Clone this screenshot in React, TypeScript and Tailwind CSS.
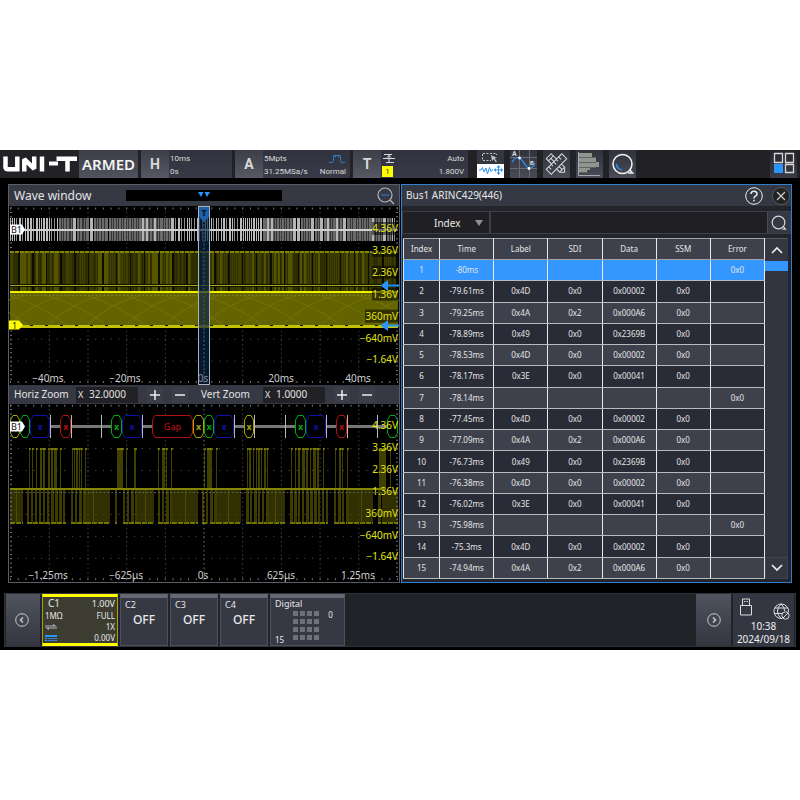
import React, { useState } from "react";

const V_GRID = [49.3, 88, 126.7, 165.4, 204, 242.7, 281.4, 320.1, 358.8];
const VOLTS = ["4.36V", "3.36V", "2.36V", "1.36V", "360mV", "−640mV", "−1.64V"];

const ROWS: string[][] = [
  ["1", "-80ms", "", "", "", "", "0x0"],
  ["2", "-79.61ms", "0x4D", "0x0", "0x00002", "0x0", ""],
  ["3", "-79.25ms", "0x4A", "0x2", "0x000A6", "0x0", ""],
  ["4", "-78.89ms", "0x49", "0x0", "0x2369B", "0x0", ""],
  ["5", "-78.53ms", "0x4D", "0x0", "0x00002", "0x0", ""],
  ["6", "-78.17ms", "0x3E", "0x0", "0x00041", "0x0", ""],
  ["7", "-78.14ms", "", "", "", "", "0x0"],
  ["8", "-77.45ms", "0x4D", "0x0", "0x00002", "0x0", ""],
  ["9", "-77.09ms", "0x4A", "0x2", "0x000A6", "0x0", ""],
  ["10", "-76.73ms", "0x49", "0x0", "0x2369B", "0x0", ""],
  ["11", "-76.38ms", "0x4D", "0x0", "0x00002", "0x0", ""],
  ["12", "-76.02ms", "0x3E", "0x0", "0x00041", "0x0", ""],
  ["13", "-75.98ms", "", "", "", "", "0x0"],
  ["14", "-75.3ms", "0x4D", "0x0", "0x00002", "0x0", ""],
  ["15", "-74.94ms", "0x4A", "0x2", "0x000A6", "0x0", ""],
];

function noise(i: number) {
  const s = Math.sin(i * 127.1 + 11.7) * 43758.5453;
  return s - Math.floor(s);
}

function Grid({ top, step }: { top: number; step: number }) {
  const bottom = top + step * 8;
  const rows = [1, 2, 3, 4, 5, 6, 7].map((n) => top + n * step);
  return (
    <g fill="none" stroke="#777">
      {V_GRID.map((x) => (
        <line key={x} x1={x} x2={x} y1={top} y2={bottom} stroke={x === 204 ? "#7a7a7a" : "#3e3e3e"} strokeDasharray="1.5 2.9" />
      ))}
      {rows.map((y, n) => (
        <line key={y} x1={10} x2={398} y1={y} y2={y} stroke={n === 3 ? "#6a6a6a" : "#4c4c4c"} strokeDasharray={n === 3 ? "1.5 2.4" : "1.2 6.54"} />
      ))}
      <line x1={10} x2={398} y1={top + 1} y2={top + 1} strokeWidth={2} strokeDasharray="1 6.74" />
      <line x1={10} x2={398} y1={bottom - 1} y2={bottom - 1} strokeWidth={2} strokeDasharray="1 6.74" />
      <line x1={11} x2={11} y1={top} y2={bottom} strokeWidth={2} strokeDasharray="1 3.39" />
      <line x1={397} x2={397} y1={top} y2={bottom} strokeWidth={2} strokeDasharray="1 3.39" />
    </g>
  );
}

function VoltLabels({ first, shade }: { first: number; shade: boolean }) {
  return (
    <g fill="#e2e21a" fontSize={10} textAnchor="end">
      {VOLTS.map((v, i) => (
        <React.Fragment key={v}>
          {shade && i < 5 && (
            <rect x={i === 4 ? 365 : 372} y={first + i * 21.9 - 10} width={i === 4 ? 33 : 26} height={13} fill="#000" opacity={0.5} />
          )}
          <text x={398} y={first + i * 21.9}>{v}</text>
        </React.Fragment>
      ))}
    </g>
  );
}

function BusFlag({ y }: { y: number }) {
  return (
    <g>
      <path d={`M10 ${y - 5}h12l3 5-3 5H10z`} fill="#fff" />
      <text x={11} y={y + 3.5} fontSize={9} fill="#111">B1</text>
    </g>
  );
}

function WavePlot() {
  const busBars = [];
  for (let x = 10, i = 0; x < 397; i++) {
    const dense = (x > 58 && x < 172) || (x > 262 && x < 392);
    const n = noise(i);
    const w = dense ? (n > 0.6 ? 3 : 2) : n > 0.75 ? 2 : 1;
    const level = dense ? (n > 0.8 ? "#b4b4b4" : "#6a6a6a") : n > 0.4 ? "#bcbcbc" : "#8c8c8c";
    busBars.push(<rect key={i} x={x} y={218} width={w} height={23} fill={level} />);
    x += w + (dense && n < 0.7 ? 0.5 : 1) + (!dense && n < 0.35 ? 1 : 0);
  }
  const stripes = [];
  for (let i = 0; i < 194; i++) {
    const n = noise(i + 500);
    stripes.push(
      <rect key={i} x={10 + i * 2} y={251} width={n > 0.7 ? 2 : 1} height={40} fill={i % 7 === 4 ? "#0c0c00" : n > 0.75 ? "#555500" : n > 0.2 ? "#404000" : "#2a2a00"} />
    );
  }
  const arcs = [];
  for (let i = -1; i < 11; i++) {
    const x = 10 + i * 39;
    arcs.push(<path key={i} d={`M${x} 324Q${x + 26} 301 ${x + 52} 296M${x} 296Q${x + 30} 305 ${x + 56} 324`} />);
  }
  return (
    <svg viewBox="9 206 390 179" className="block h-auto w-full bg-black font-['Noto_Sans',sans-serif]" role="img" aria-label="Wave window">
      <Grid top={207.5} step={21.95} />
      {busBars}
      <rect x={10} y={229} width={388} height={2} fill="#cfcfcf" />
      <rect x={10} y={251} width={388} height={40} fill="#323200" />
      {stripes}
      <line x1={10} x2={398} y1={252} y2={252} stroke="#868600" strokeWidth={2} strokeDasharray="4 1" />
      <rect x={10} y={284} width={388} height={3} fill="#111100" />
      <rect x={10} y={285} width={388} height={1} fill="#a8a820" />
      <rect x={10} y={293} width={388} height={32} fill="#636300" />
      <g fill="none" stroke="#72720e" strokeWidth={1}>{arcs}</g>
      <line x1={10} x2={398} y1={295.5} y2={295.5} stroke="#85854a" strokeDasharray="1.5 2.4" />
      <rect x={10} y={291} width={388} height={2} fill="#eeee00" />
      <rect x={10} y={325} width={388} height={3} fill="#c2c200" />
      <line x1={30} x2={398} y1={325.5} y2={325.5} stroke="#111" strokeDasharray="3 12" />
      <rect x={198} y={206} width={12} height={179} fill="#0a2440" opacity={0.68} />
      <line x1={204} x2={204} y1={220} y2={384} stroke="#2c5a8a" strokeDasharray="2 2" />
      <path d="M199 207h10v10l-5 5-5-5z" fill="#1d5fa8" />
      <text x={204} y={216} fontSize={9} fontWeight={700} fill="#06182c" textAnchor="middle">T</text>
      <rect x={198.5} y={206.5} width={11} height={178} fill="none" stroke="#a9b2bd" />
      <BusFlag y={229.5} />
      <path d="M9 320.500h10l4 4.500-4 4.500H9z" fill="#ffff00" />
      <text x={12} y={328.5} fontSize={9} fill="#222">1</text>
      <VoltLabels first={232} shade />
      <g fill="#2b95ff">
        <path d="M380.500 285.500l7.500-5.500v4.500h11v2h-11v4.500z" />
        <path d="M380.500 325.500l7.500-5.500v4.500h11v2h-11v4.500z" />
      </g>
      <g fill="#cfcfcf" fontSize={10} textAnchor="middle">
        <text x={48} y={382}>−40ms</text>
        <text x={125} y={382}>−20ms</text>
        <text x={203} y={382} fill="#7f8e9e">0s</text>
        <text x={281} y={382}>20ms</text>
        <text x={358} y={382}>40ms</text>
      </g>
    </svg>
  );
}

const FRAMES: [number, number, string, string][] = [
  [10, 10, "#a6a600", ""],
  [20, 10, "#00a814", ""],
  [30, 20, "#1010a8", "x"],
  [60, 11, "#b01010", "x"],
  [111, 11, "#00a814", "x"],
  [122, 20, "#1010a8", "x"],
  [152, 41, "#b01010", "Gap"],
  [193, 11, "#a6a600", "x"],
  [204, 10, "#00a814", "x"],
  [214, 20, "#1010a8", "x"],
  [244, 10, "#a6a600", "x"],
  [295, 11, "#00a814", "x"],
  [306, 20, "#1010a8", "x"],
  [336, 11, "#b01010", "x"],
  [387, 11, "#00a814", ""],
];
const TICKS = [50.5, 71.5, 101.5, 142.5, 234.5, 254.5, 285.5, 326.5, 347.5, 377.5];
const LINKS = [[50, 60], [71, 111], [142, 152], [234, 244], [254, 295], [326, 336], [347, 387]];
const HIGH: [number, number][] = [
  [29, 1], [32, 1], [36, 1], [40, 2], [43, 2], [48, 2], [51, 2], [54, 3], [60, 1], [72, 1], [74, 1], [76, 2], [79, 1], [81, 1], [85, 1],
  [117, 6], [126, 1], [134, 2], [158, 1], [162, 3], [166, 1], [171, 1], [204, 1], [207, 5], [216, 1],
  [247, 1], [249, 2], [253, 1], [256, 1], [258, 2], [261, 1], [264, 2], [267, 1],
  [291, 1], [295, 1], [298, 2], [302, 3], [306, 2], [310, 1], [313, 3], [317, 2], [323, 1],
  [335, 1], [339, 2], [342, 1], [347, 1], [379, 7], [390, 1],
];
const LOW_SOLID = [[10, 23], [86, 110], [136, 154], [172, 198], [217, 241], [268, 285], [348, 373], [382, 398]];
const LOW_STRIPED = [[27, 66], [71, 86], [115, 117], [123, 136], [158, 171], [202, 207], [210, 217], [246, 267], [290, 328], [334, 347], [378, 381]];

function ZoomPlot() {
  const stripes = [];
  for (const [a, b] of LOW_STRIPED) {
    for (let x = a; x < b; x += 4) {
      stripes.push(<rect key={x} x={x} y={490} width={noise(x) > 0.5 ? 3 : 2} height={34} />);
    }
  }
  return (
    <svg viewBox="9 404 390 178" className="block h-auto w-full bg-black font-['Noto_Sans',sans-serif]" role="img" aria-label="Zoomed wave">
      <g fill="#303000">
        {LOW_SOLID.map(([a, b]) => <rect key={a} x={a} y={490} width={b - a} height={33} />)}
      </g>
      <g fill="#3c3c00">{stripes}</g>
      <g fill="#404000">
        {HIGH.map(([x, w]) => <rect key={x} x={x} y={449} width={w} height={39} />)}
      </g>
      <g fill="#7c7c00">
        {HIGH.map(([x, w]) => <rect key={x} x={x} y={448} width={w + 0.8} height={2} />)}
      </g>
      <g stroke="#757500" strokeWidth={2} strokeDasharray="5 1">
        {LOW_SOLID.concat(LOW_STRIPED).map(([a, b]) => <line key={a} x1={a} x2={b} y1={523} y2={523} />)}
      </g>
      <g fill="#4c4c00">
        {[16, 93, 145, 185, 228, 275, 361].map((x) => <rect key={x} x={x} y={490} width={1} height={33} />)}
      </g>
      <Grid top={404.7} step={21.95} />
      <rect x={10} y={488} width={374} height={2} fill="#858500" />
      <g fill="#777">
        {LINKS.map(([a, b]) => <rect key={a} x={a} y={425} width={b - a} height={3} />)}
      </g>
      <g stroke="#b8b8b8">
        {TICKS.map((x) => <line key={x} x1={x} x2={x} y1={415} y2={438} />)}
      </g>
      {FRAMES.map(([x, w, color, label]) => (
        <g key={x}>
          <path d={`M${x + 3} 415.500H${x + w - 3}L${x + w - 0.5} 420V433L${x + w - 3} 437.500H${x + 3}L${x + 0.5} 433V420Z`} fill="#000" stroke={color} />
          <text x={x + w / 2} y={430} fontSize={9} textAnchor="middle" fill={color} fontWeight={label === "x" ? 700 : 500}>{label}</text>
        </g>
      ))}
      <BusFlag y={426.5} />
      <VoltLabels first={429} shade={false} />
      <g fill="#cfcfcf" fontSize={10} textAnchor="middle">
        <text x={48} y={579}>−1.25ms</text>
        <text x={126} y={579}>−625μs</text>
        <text x={203} y={579}>0s</text>
        <text x={281} y={579}>625μs</text>
        <text x={358} y={579}>1.25ms</text>
      </g>
    </svg>
  );
}

function TopTile({ label, children, width }: { label: string; children: React.ReactNode; width: string }) {
  return (
    <button type="button" className={`flex h-7 shrink-0 text-left ${width}`}>
      <span className="flex h-7 w-7 items-center justify-center bg-gradient-to-b from-[#3c3e48] to-[#565964] text-sm font-bold text-[#d8d8da]">{label}</span>
      <span className="flex h-7 flex-1 flex-col justify-center bg-gradient-to-b from-[#30333e] to-[#383b47] px-px pt-px text-[8px] leading-[13px] text-[#dcdcdc]">{children}</span>
    </button>
  );
}

function IconButton({ label, children }: { label: string; children: React.ReactNode }) {
  return (
    <button type="button" aria-label={label} className="flex h-7 w-[27px] shrink-0 items-center justify-center bg-gradient-to-b from-[#30323c] to-[#494c57]">
      {children}
    </button>
  );
}

function TopBar() {
  return (
    <header className="flex h-7 items-stretch bg-[#222226] pr-[3px] font-['Roboto','Noto_Sans',sans-serif]">
      <svg viewBox="0 0 74 16" className="mt-[6px] ml-[3px] h-4 w-[74px] shrink-0" role="img" aria-label="UNI-T">
        <g fill="none" stroke="#fff" strokeWidth="4.500">
          <path d="M2.500 .5V11Q2.500 13.200 5 13.200H14.300V.5" />
          <path d="M21.300 15.500V3.200L31.200 12.800V.5" strokeLinejoin="bevel" />
          <path d="M39 .5V15.500" />
          <path d="M46 7.500H55" strokeWidth="4" />
          <path d="M53.500 2.800H74M64.500 2.800V15.500" />
        </g>
      </svg>
      <button type="button" className="ml-[2px] h-7 w-[59px] shrink-0 bg-gradient-to-b from-[#3b3d47] to-[#50535e] text-center font-['Noto_Sans',sans-serif] text-[15px] font-semibold text-[#f4f4f4]">ARMED</button>
      <div className="ml-[3px] flex gap-[3px]">
        <TopTile label="H" width="w-[91px]">
          <span>10ms</span>
          <span>0s</span>
        </TopTile>
        <TopTile label="A" width="w-[115px]">
          <span className="flex justify-between pr-1">
            5Mpts
            <svg viewBox="0 0 16 10" className="mt-[2px] h-[10px] w-4" fill="none" stroke="#2f7cc4" strokeWidth="1">
              <path d="M0 8.500H3Q4.500 8.500 4.500 6.500V1.500H11.500V6.500Q11.500 8.500 13 8.500H16M6.500 3.500V1.500M9.500 3.500V1.500" />
            </svg>
          </span>
          <span className="flex justify-between pr-[3px]"><span>31.25MSa/s</span><span>Normal</span></span>
        </TopTile>
        <TopTile label="T" width="w-[115px]">
          <span className="flex justify-between pr-[3px]">
            <svg viewBox="0 0 12 11" className="mt-px ml-px h-[11px] w-3" fill="none" stroke="#d8d8d8" strokeWidth="1">
              <path d="M1 1.500H9M3 9.500H11M6 1.500V9.500M0 5.500H12M4 4.500L6 2.500 8 4.500" />
            </svg>
            <span>Auto</span>
          </span>
          <span className="flex items-center justify-between pr-[3px]">
            <span className="h-[11px] w-[11px] bg-[#ffff00] text-center leading-[11px] text-[#333]">1</span>
            <span>1.800V</span>
          </span>
        </TopTile>
      </div>
      <div className="ml-[9px] flex gap-[6px]">
        <button type="button" aria-label="Zoom or drag" className="h-7 w-[27px] shrink-0">
          <svg viewBox="0 0 27 28" className="h-7 w-[27px]" fill="none">
            <path d="M0 0H27V14H0z" fill="#343640" />
            <path d="M0 14H27V28H0z" fill="#fff" />
            <path d="M6 3.500H19M6 10.500H14M5.500 4V10M19.500 4V5" stroke="#c4c4c4" strokeDasharray="2 1.500" />
            <path d="M14 5L20 8 17.500 8.500 20 11.500 18.800 12 16.500 9.300 15 11z" fill="#c4c4c4" />
            <path d="M2 20H4L5.500 17.500 7 22 9 18 10.500 24 12.500 17.500 14 21.500 15 20H16" stroke="#2b8ff0" />
            <path d="M18 20H25M21.500 16.500V23.500" stroke="#2b8ff0" />
            <path d="M21.500 15L23.500 17.500H19.500zM21.500 25L19.500 22.500H23.500zM16.800 20L19 18V22zM26.200 20L24 18V22z" fill="#2b8ff0" />
          </svg>
        </button>
        <IconButton label="Cursor">
          <svg viewBox="0 0 27 28" className="h-7 w-[27px]" fill="none">
            <path d="M9.500 0V28M19.500 0V28M0 7.500H27M0 18.500H27" stroke="#6a6c75" />
            <path d="M2 12Q7 5 11 9Q15 14 17 17Q22 20 25 13" stroke="#2b8ff0" strokeWidth="1.300" />
            <circle cx="9.500" cy="8" r="1.400" fill="#fff" />
            <circle cx="19" cy="18.500" r="1.400" fill="#fff" />
            <text x="2" y="6" fontSize="7" fontWeight="700" fill="#ddd">A</text>
            <text x="20" y="15" fontSize="6" fontWeight="700" fill="#ddd">B</text>
          </svg>
        </IconButton>
        <IconButton label="Measure">
          <svg viewBox="0 0 27 28" className="h-7 w-[27px]" fill="none" stroke="#d8d8d8" strokeWidth="1">
            <g transform="rotate(45 13.500 14)">
              <path d="M2.500 10.500H21.500L25 14 21.500 17.500H2.500z" />
              <path d="M5.500 10.500V17.500M5.500 14H21.500M21.500 10.500V17.500" />
            </g>
            <g transform="rotate(-45 13.500 14)">
              <path d="M2.500 10.500H24.500V17.500H2.500z" fill="#3c3e49" />
              <path d="M6 10.500V14M9.500 10.500V13M13 10.500V14M16.500 10.500V13M20 10.500V14" />
            </g>
          </svg>
        </IconButton>
        <IconButton label="Statistics">
          <svg viewBox="0 0 27 28" className="h-7 w-[27px]">
            <path d="M2 3H16V7H20V12H23V17H14V20H11V23H2z" fill="#92948f" />
            <path d="M2 7.500H20M2 12.500H20M2 17.500H20M2 22.500H12" stroke="#60625f" />
            <path d="M2.500 2V25.500H24" fill="none" stroke="#aaaaaa" />
          </svg>
        </IconButton>
        <IconButton label="Search">
          <svg viewBox="0 0 27 28" className="h-7 w-[27px]" fill="none">
            <circle cx="13.500" cy="14" r="9.500" stroke="#f0f0f0" strokeWidth="1.600" />
            <path d="M19 23H23.500L20.500 19.500" stroke="#f0f0f0" strokeWidth="1.600" />
            <path d="M7.500 14Q8 19 13 20" stroke="#2b8ff0" strokeWidth="1.600" />
          </svg>
        </IconButton>
      </div>
      <button type="button" aria-label="Layout" className="ml-auto h-7 w-[27px] bg-gradient-to-b from-[#25262c] to-[#3a3c46]">
        <svg viewBox="0 0 27 28" className="h-7 w-[27px]" fill="none" stroke="#d6d6d6">
          <path d="M4.500 3.500H12.500V12.500H4.500zM15.500 3.500H23.500V12.500H15.500zM15.500 14.500H23.500V22.500H15.500z" strokeWidth="1.300" />
          <path d="M4 14H13V23H4z" fill="#2b95ff" stroke="none" />
        </svg>
      </button>
    </header>
  );
}

function ZoomField({ label, id, value, gap }: { label: string; id: string; value: string; gap: string }) {
  const [v, setV] = useState(value);
  return (
    <div className={`flex h-[19px] items-center ${gap}`}>
      <label htmlFor={id} className="w-[62px] whitespace-nowrap">{label}</label>
      <span className="flex h-4 w-[62px] items-center bg-[#222226] pl-[2px] text-[9px]">
        <span className="w-[11px]">X</span>
        <input id={id} value={v} onChange={(e) => setV(e.target.value)} className="w-11 bg-transparent text-[10px] text-[#e2e2e2] outline-none" />
      </span>
      <button type="button" aria-label={`${label} in`} className="ml-[9px] flex h-4 w-4 items-center justify-center bg-[#3b3e49]">
        <svg viewBox="0 0 12 12" className="h-3 w-3" stroke="#eee" strokeWidth="1.500"><path d="M1 6H11M6 1V11" /></svg>
      </button>
      <button type="button" aria-label={`${label} out`} className="ml-[9px] flex h-4 w-4 items-center justify-center bg-[#3b3e49]">
        <svg viewBox="0 0 12 12" className="h-3 w-3" stroke="#eee" strokeWidth="1.500"><path d="M1 6H11" /></svg>
      </button>
    </div>
  );
}

function WavePanel() {
  return (
    <section className="border border-[#5b5e68] bg-[#363944]">
      <div className="flex h-[21px] items-center pr-1 pl-[5px]">
        <h2 className="w-28 text-[12px] leading-[21px] text-[#e4e4e4]">Wave window</h2>
        <div className="flex h-[11px] w-[156px] items-start justify-center bg-black pt-[2px]">
          <svg viewBox="0 0 12 6" className="h-[6px] w-3" fill="#2b95ff"><path d="M0 0H5.500L3 5zM6.500 0H12L9 5z" /></svg>
        </div>
        <button type="button" aria-label="Zoom out" className="ml-auto">
          <svg viewBox="0 0 18 18" className="h-[18px] w-[18px]" fill="none" stroke="#b2b5bb" strokeWidth="1.200">
            <circle cx="8" cy="8" r="7" />
            <path d="M13 13L17 17" />
            <path d="M4 8H12" stroke="#2777bd" />
          </svg>
        </button>
      </div>
      <WavePlot />
      <div className="flex h-[19px] bg-[#363944] pl-[5px] text-[10px] text-[#e4e4e4]">
        <ZoomField label="Horiz Zoom" id="hz" value="32.0000" gap="" />
        <ZoomField label="Vert Zoom" id="vz" value="1.0000" gap="ml-[13px]" />
      </div>
      <ZoomPlot />
    </section>
  );
}

function BusPanel() {
  return (
    <section className="flex flex-col border border-[#2f7fd0] bg-[#24252b]">
      <div className="flex h-[21px] items-center bg-[#343843] pr-px pl-1">
        <h2 className="text-[10px] text-[#e8e8e8]">Bus1 ARINC429(446)</h2>
        <button type="button" aria-label="Help" className="mr-[9px] ml-auto">
          <svg viewBox="0 0 18 18" className="h-[18px] w-[18px]" fill="none" stroke="#ececec">
            <circle cx="9" cy="9" r="8.300" />
            <path d="M6 7Q6 4.200 9 4.200T12 7Q12 8.300 10.500 9.200T9 11.500M9 12.800V14.300" strokeWidth="1.500" />
          </svg>
        </button>
        <button type="button" aria-label="Close">
          <svg viewBox="0 0 18 18" className="h-[18px] w-[18px]" fill="none" stroke="#c9c9c9">
            <circle cx="9" cy="9" r="8.500" fill="#222222" stroke="#55565c" />
            <path d="M5 5L13 13M13 5L5 13" strokeWidth="1.200" />
          </svg>
        </button>
      </div>
      <div className="mt-[5px] flex h-[23px] border border-[#3c3e48] bg-[#202024]">
        <div className="relative flex w-[88px] border-r-2 border-[#3c3e48]">
          <select aria-label="Search field" className="h-[21px] w-full appearance-none bg-transparent pl-[31px] text-[10px] leading-[16px] text-[#e8e8e8] outline-none">
            <option>Index</option>
          </select>
          <svg viewBox="0 0 8 6" className="pointer-events-none absolute top-[8px] right-[6px] h-[6px] w-2" fill="#8f9093"><path d="M0 0H8L4 6z" /></svg>
        </div>
        <input aria-label="Search text" className="min-w-0 flex-1 bg-transparent px-1 text-[11px] text-white outline-none" />
        <button type="button" aria-label="Search" className="flex w-[23px] items-center justify-center border-l border-[#4a4c56] bg-[#343843]">
          <svg viewBox="0 0 16 16" className="h-4 w-4" fill="none" stroke="#d6d6d6" strokeWidth="1.200">
            <circle cx="7.500" cy="7.500" r="6.300" />
            <path d="M11.500 14.200H14.500L12.500 11.500" />
          </svg>
        </button>
      </div>
      <div className="mt-1 flex">
        <table className="ml-px h-[341px] flex-1 table-fixed border-collapse text-center text-[8px] leading-[10px] text-[#e4e4e4]">
          <colgroup>
            <col className="w-[10%]" />
            <col className="w-[15%]" />
            <col className="w-[15%]" />
            <col className="w-[15%]" />
            <col className="w-[15%]" />
            <col className="w-[15%]" />
            <col className="w-[15%]" />
          </colgroup>
          <thead>
            <tr className="h-[21px] bg-[#3e414c]">
              {["Index", "Time", "Label", "SDI", "Data", "SSM", "Error"].map((h) => (
                <th key={h} className="border border-x-[#e8e8ea] border-y-[#a3a4a9] p-0 font-normal">{h}</th>
              ))}
            </tr>
          </thead>
          <tbody>
            {ROWS.map((r, i) => (
              <tr key={r[0]} className={i === 0 ? "h-[21px] bg-[#3397ff]" : i % 2 ? "h-[21px] bg-[#292c37]" : "h-[21px] bg-[#3e414c]"}>
                {r.map((c, j) => (
                  <td key={j} className="border border-x-[#e8e8ea] border-y-[#b9babe] p-0">{c}</td>
                ))}
              </tr>
            ))}
          </tbody>
        </table>
        <div className="mr-[3px] flex w-[23px] flex-col bg-[#32353f]">
          <button type="button" aria-label="Scroll up" className="flex h-[23px] items-center justify-center border-t border-[#55575f] bg-[#343640]">
            <svg viewBox="0 0 12 8" className="h-2 w-3" fill="none" stroke="#f0f0f0" strokeWidth="1.600"><path d="M1 7L6 2L11 7" /></svg>
          </button>
          <div className="h-[10px] bg-[#3397ff]" />
          <button type="button" aria-label="Scroll down" className="mt-auto flex h-[22px] items-center justify-center border border-[#40434d] bg-[#343640]">
            <svg viewBox="0 0 12 8" className="h-2 w-3" fill="none" stroke="#f0f0f0" strokeWidth="1.600"><path d="M1 1L6 6L11 1" /></svg>
          </button>
        </div>
      </div>
    </section>
  );
}

function Channel({ name }: { name: string }) {
  return (
    <button type="button" className="flex h-[52px] w-12 flex-col border border-t-4 border-[#4e515c] border-t-[#666874] bg-[#363944] text-left text-[#e8e8e8]">
      <span className="pl-1 text-[9px] leading-[13px]">{name}</span>
      <span className="self-center text-[12px] leading-[17px] font-medium">OFF</span>
    </button>
  );
}

function BottomBar() {
  return (
    <footer className="mx-1 mt-[10px] mb-[2px] flex h-[54px] items-center gap-[2px] border border-[#30323a] bg-[#222328] px-px">
      <button type="button" aria-label="Previous" className="flex h-[52px] w-[34px] items-center justify-center bg-gradient-to-b from-[#50545f] to-[#33363f] pr-[2px]">
        <svg viewBox="0 0 14 14" className="h-[14px] w-[14px]" fill="none" stroke="#c9c9c9"><circle cx="7" cy="7" r="6.300" /><path d="M8 4.500L5.500 7L8 9.500" strokeWidth="1.500" /></svg>
      </button>
      <button type="button" className="flex h-[52px] w-[76px] flex-col border border-y-[3px] border-[#a5a500] border-y-[#ffff00] bg-[#3c3c30] px-[2px] text-left text-[8px] leading-[11px] text-[#e8e8e8]">
        <span className="flex justify-between pl-[3px] leading-[13px]"><span className="text-[10px]">C1</span><span className="text-[9px]">1.00V</span></span>
        <span className="flex justify-between"><span>1MΩ</span><span>FULL</span></span>
        <span className="flex items-center justify-between">
          <svg viewBox="0 0 12 6" className="h-[6px] w-3" fill="#b4b4c4"><path d="M0 1.500H8V0L12 2.500H0zM12 4.500H4V6L0 3.500H12z" /></svg>
          <span>1X</span>
        </span>
        <span className="flex items-center justify-between">
          <svg viewBox="0 0 12 6" className="h-[6px] w-3" fill="none" stroke="#2b95ff"><path d="M0 1H12" strokeWidth="2" /><path d="M0 3.500H12M0 5.500H12" strokeDasharray="2 .6" /></svg>
          <span>0.00V</span>
        </span>
      </button>
      <Channel name="C2" />
      <Channel name="C3" />
      <Channel name="C4" />
      <button type="button" className="flex h-[52px] w-[75px] flex-col border border-t-4 border-[#4e515c] border-t-[#666874] bg-[#363944] px-1 text-left text-[9px] leading-[11px] text-[#e8e8e8]">
        <span>Digital</span>
        <span className="flex flex-1 gap-[9px] text-[8px]">
          <span className="self-end">15</span>
          <span className="mt-[2px] grid h-[29px] grid-cols-4 gap-x-[2px] gap-y-[3px]">
            {Array.from({ length: 16 }, (_, i) => <span key={i} className="h-[5px] w-[5px] bg-[#6d6f7b]" />)}
          </span>
          <span>0</span>
        </span>
      </button>
      <button type="button" aria-label="Next" className="ml-auto flex h-[52px] w-[35px] items-center justify-center bg-gradient-to-b from-[#50545f] to-[#33363f]">
        <svg viewBox="0 0 14 14" className="h-[14px] w-[14px]" fill="none" stroke="#c9c9c9"><circle cx="7" cy="7" r="6.300" /><path d="M6 4.500L8.500 7L6 9.500" strokeWidth="1.500" /></svg>
      </button>
      <div className="flex h-[52px] w-[61px] flex-col bg-[#343742] text-center text-[10px] leading-[13px] text-[#f0f0f0]">
        <div className="flex h-[26px] items-end justify-between pr-1 pl-[7px]">
          <svg viewBox="0 0 12 18" className="mb-[4px] h-[18px] w-3" fill="none" stroke="#dcdcdc"><path d="M.5 7.500H11.500V17H.5zM2.500 7.500V1H9.500V7.500M4 3.500H5.500M6.500 3.500H8" /></svg>
          <svg viewBox="0 0 17 17" className="h-[17px] w-[17px]" fill="none" stroke="#dcdcdc">
            <path d="M9 15.500A7.300 7.300 0 1 1 15.500 9M8 1Q4.500 4 4.500 8T8 15.500M8 1Q11.500 4 11.700 8M1.500 5H15M1 10.500H9" />
            <circle cx="12.500" cy="12.500" r="3.700" /><path d="M10 15L15 10" />
          </svg>
        </div>
        <time>10:38</time>
        <span>2024/09/18</span>
      </div>
    </footer>
  );
}

export default function App() {
  return (
    <div className="flex min-h-screen flex-col justify-center bg-white font-['Noto_Sans',sans-serif]">
      <main className="bg-black pb-px">
        <TopBar />
        <div className="mt-[6px] grid grid-cols-[392fr_391fr] gap-px px-2">
          <WavePanel />
          <BusPanel />
        </div>
        <BottomBar />
      </main>
    </div>
  );
}
